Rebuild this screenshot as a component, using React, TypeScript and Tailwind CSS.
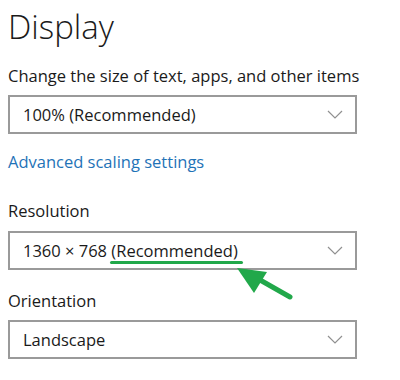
import React from "react";

function Chevron() {
  return (
    <svg width="16" height="9" viewBox="0 0 16 9" className="shrink-0">
      <polyline points="1,1 8,8 15,1" fill="none" stroke="#909090" strokeWidth="1.2" />
    </svg>
  );
}

function Select({ children }: { children: React.ReactNode }) {
  return (
    <div className="flex h-[39px] w-[349px] items-center justify-between border-2 border-[#9a9a9a] bg-white pl-[13px] pr-[12px] text-[16.5px] leading-[22px] text-[#1a1a1a]">
      <div className="relative">{children}</div>
      <Chevron />
    </div>
  );
}

export default function App() {
  return (
    <div
      className="relative h-[380px] w-[400px] overflow-hidden bg-white pl-[8px] pt-[5px] text-[#1a1a1a]"
      style={{ fontFamily: '"Open Sans", "Noto Sans", sans-serif' }}
    >
      <div className="text-[33px] font-light leading-[44px]">Display</div>
      <div className="mt-[16px] text-[16.5px] leading-[22px]">Change the size of text, apps, and other items</div>
      <div className="mt-[8px]">
        <Select>100% (Recommended)</Select>
      </div>
      <div className="mt-[17px] text-[16.5px] leading-[22px] text-[#1f73b7]">Advanced scaling settings</div>
      <div className="mt-[27px] text-[16.5px] leading-[22px]">Resolution</div>
      <div className="mt-[9px]">
        <Select>
          1360 × 768 <span className="relative">(Recommended)
            <span className="absolute left-[-1px] right-[-5px] top-[22px] h-[3px] rounded-full bg-[#21a84a]" />
          </span>
        </Select>
      </div>
      <div className="mt-[20px] text-[16.5px] leading-[22px]">Orientation</div>
      <div className="mt-[8px]">
        <Select>Landscape</Select>
      </div>
      <svg className="absolute left-[230px] top-[262px]" width="70" height="42" viewBox="230 262 70 42">
        <line x1="290" y1="297" x2="246" y2="272" stroke="#21a84a" strokeWidth="5" strokeLinecap="round" />
        <polygon points="237,268 267,272 254,293" fill="#21a84a" />
      </svg>
    </div>
  );
}
